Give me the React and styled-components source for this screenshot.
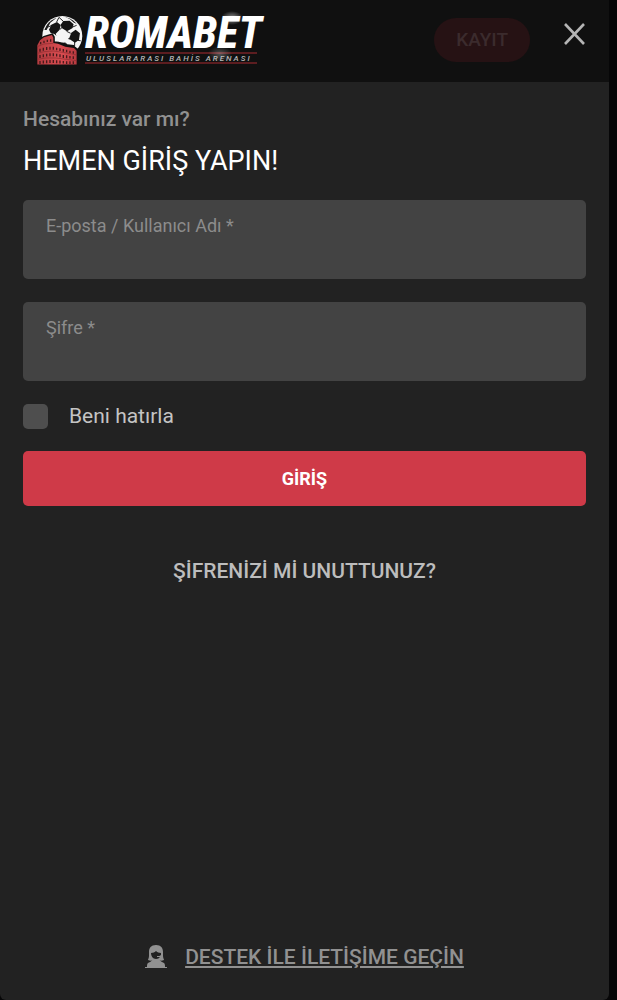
import React from "react";
import styled, { createGlobalStyle } from "styled-components";

const GlobalStyle = createGlobalStyle`
  * {
    box-sizing: border-box;
  }
  body {
    margin: 0;
    background: #060607;
    font-family: Roboto, sans-serif;
  }
`;

const Page = styled.div`
  display: flex;
  min-height: 100vh;
  padding-right: 8px;
`;

const Panel = styled.main`
  flex: 1;
  display: flex;
  flex-direction: column;
  overflow: hidden;
  background: #222222;
  border-radius: 0 0 6px 6px;
`;

const Header = styled.header`
  display: flex;
  align-items: flex-start;
  height: 82px;
  padding: 0 22px 0 32px;
  background: #101010;
`;

const LogoLink = styled.a`
  display: block;
  margin-right: auto;

  svg {
    display: block;
    overflow: visible;
  }
`;

const Register = styled.button`
  height: 44px;
  margin: 18px 32px 0 0;
  padding: 0 22px;
  border: 0;
  border-radius: 22px;
  background: #261214;
  color: #3b2b2d;
  font: 500 19px/24px Roboto, sans-serif;
`;

const Close = styled.button`
  margin-top: 22px;
  padding: 0;
  border: 0;
  background: none;

  svg {
    display: block;
  }
`;

const Form = styled.form`
  display: flex;
  flex-direction: column;
  padding: 23px 23px 0;
`;

const Question = styled.p`
  margin: 0;
  color: #919191;
  font-size: 21px;
  font-weight: 500;
  line-height: 28px;
`;

const Title = styled.h1`
  margin: 11px 0 22px;
  color: #ffffff;
  font-size: 27px;
  font-weight: 400;
  line-height: 34px;
`;

const Field = styled.label`
  display: flex;
  flex-direction: column;
  height: 79px;
  margin-bottom: 23px;
  padding: 15px 23px 0;
  border-radius: 5px;
  background: #434343;
  color: #8c8c8c;
  font-size: 18px;
  line-height: 22px;
`;

const Input = styled.input`
  width: 100%;
  height: 32px;
  padding: 0;
  border: 0;
  outline: 0;
  background: transparent;
  color: #ffffff;
  font: 400 18px/22px Roboto, sans-serif;
`;

const Remember = styled.label`
  display: flex;
  align-items: center;
  align-self: flex-start;
  gap: 21px;
  margin-bottom: 22px;
  color: #c4c4c4;
  font-size: 21px;
  line-height: 25px;
`;

const Checkbox = styled.input`
  appearance: none;
  width: 25px;
  height: 25px;
  margin: 0;
  border-radius: 5px;
  background: #4e4e4e;

  &:checked {
    background: #cf3a48;
  }
`;

const Submit = styled.button`
  height: 55px;
  border: 0;
  border-radius: 5px;
  background: #cf3a48;
  color: #ffffff;
  font: 700 18px/24px Roboto, sans-serif;
`;

const Forgot = styled.a`
  align-self: center;
  margin-top: 51px;
  color: #bdbdbd;
  font-size: 21px;
  font-weight: 500;
  line-height: 28px;
  text-decoration: none;
`;

const Support = styled.footer`
  display: flex;
  align-items: center;
  justify-content: center;
  gap: 18px;
  margin-top: auto;
  padding-bottom: 29px;
`;

const SupportLink = styled.a`
  color: #919191;
  font-size: 21px;
  font-weight: 500;
  line-height: 28px;
  text-decoration: underline;
`;

const LogoWord = styled.text`
  fill: #ffffff;
  font: italic 800 44px "Roboto Condensed", "Liberation Sans Narrow", Roboto, sans-serif;
`;

const LogoTagline = styled.text`
  fill: #b4b4b4;
  font: italic 500 8px Roboto, sans-serif;
  letter-spacing: 2px;
`;

function Logo() {
  return (
    <svg width="240" height="72" viewBox="32 0 240 72" aria-label="Romabet">
      <defs>
        <clipPath id="ball">
          <circle cx="79" cy="72" r="57" />
        </clipPath>
        <radialGradient id="glow">
          <stop offset="0" stopColor="#fff" stopOpacity="0.55" />
          <stop offset="1" stopColor="#fff" stopOpacity="0" />
        </radialGradient>
        <linearGradient id="stone" x1="0" x2="1">
          <stop offset="0" stopColor="#b43c40" />
          <stop offset="0.6" stopColor="#d94c50" />
          <stop offset="1" stopColor="#b83a40" />
        </linearGradient>
      </defs>
      <g transform="translate(36 12) scale(0.333)">
        <circle cx="79" cy="72" r="60" fill="#f4f4f4" />
        <g clipPath="url(#ball)">
          <path
            d="M72 52l7-6M57 66l3 4M92 58l12 6M97 80l5 1M86 92l6 4M62 30l7-14M82 28l-13-12M69 16l-2-6M108 46l14-6M48 40l-14 6M126 85l10 2M116 90l0 12"
            stroke="#222"
            strokeWidth="3"
          />
          <path
            d="M46 38l17-8 11 9-3 14-13 14-14-4-5-10zM82 27l19-1 12 11-4 12-16 9-16-10-3-10zM106 62l13-9 13 11-3 20-12 8-18-12zM66 90l19 2 9 5 20 2 6 10-14 12-18 6-22-12z"
            fill="#131313"
          />
          <path d="M24 54l12-24 20-14 6 1-19 15-11 22zM84 13l22 6 16 16-8-3-12-10z" fill="#1d1d1d" />
        </g>
        <path
          d="M3 160V100l8-16 13-10 25-7 5 8v15l14 2 22 10 26 4 10 8v46z"
          fill="#101010"
          stroke="#101010"
          strokeWidth="5"
        />
        <path
          d="M4 158V100l8-15 12-9 24-7 4 8v16l14 2 22 9 26 4 8 8v42z"
          fill="url(#stone)"
        />
        <path
          d="M14 97v-7M24 93v-7M34 90v-7M44 89v-7M12 119v-9M22 116v-9M32 114v-9M42 113v-9M52 113v-9M62 115v-8M72 117v-8M82 119v-8M92 121v-8M102 123v-7M112 125v-7M12 138v-9M22 136v-9M32 134v-9M42 133v-9M52 133v-9M62 134v-9M72 136v-9M82 138v-9M92 139v-9M102 140v-8M112 141v-8M12 156v-9M22 155v-9M32 154v-9M42 153v-9M52 153v-9M62 154v-9M72 155v-9M82 155v-8M92 156v-8M102 156v-8M112 156v-8"
          stroke="#481a1c"
          strokeWidth="4"
        />
        <path
          d="M4 104l20-8 28-2M4 124l20-5 28-2 40 6 30 6M4 142l26-4 28 0 64 8"
          stroke="#8e2c31"
          strokeWidth="2"
          fill="none"
        />
      </g>
      <LogoWord x="85" y="48">ROMABET</LogoWord>
      <path d="M85 53h172M85 63h172" stroke="#a82a30" />
      <LogoTagline x="86" y="61">ULUSLARARASI BAHİS ARENASI</LogoTagline>
      <ellipse cx="232" cy="18" rx="11" ry="7" fill="url(#glow)" />
      <ellipse cx="220" cy="54" rx="12" ry="8" fill="url(#glow)" opacity="0.5" />
    </svg>
  );
}

export default function App() {
  return (
    <>
      <GlobalStyle />
      <Page>
        <Panel>
          <Header>
            <LogoLink href="#">
              <Logo />
            </LogoLink>
            <Register type="button">KAYIT</Register>
            <Close type="button" aria-label="Kapat">
              <svg width="25" height="25" viewBox="0 0 25 25">
                <path d="M3 2l19 20M22 2L3 22" stroke="#b5b5b5" strokeWidth="2.6" />
              </svg>
            </Close>
          </Header>
          <Form>
            <Question>Hesabınız var mı?</Question>
            <Title>HEMEN GİRİŞ YAPIN!</Title>
            <Field>
              E-posta / Kullanıcı Adı *
              <Input type="text" name="username" />
            </Field>
            <Field>
              Şifre *
              <Input type="password" name="password" />
            </Field>
            <Remember>
              <Checkbox type="checkbox" name="remember" />
              Beni hatırla
            </Remember>
            <Submit type="submit">GİRİŞ</Submit>
            <Forgot href="#">ŞİFRENİZİ Mİ UNUTTUNUZ?</Forgot>
          </Form>
          <Support>
            <svg width="22" height="24" viewBox="0 0 22 24">
              <path
                d="M11 0C6 0 4 3 4 7v4c0 2-1 3-1 4 2 1 4 1 5 0h6c1 1 3 1 5 0 0-1-1-2-1-4V7c0-4-2-7-7-7z"
                fill="#919191"
              />
              <path
                d="M6 8c2 0 4-1 5-2 1 1 3 2 5 2v2c-1 1-2 1-4 1v1h3c-1 1-2 2-4 2-3 0-5-3-5-6z"
                fill="#222222"
              />
              <path d="M8 14c2 1 4 1 6 0 1 2 3 3 5 4 1 1 1 2 1 4h2v1H0v-1h2c0-2 0-3 1-4 2-1 4-2 5-4z" fill="#919191" />
            </svg>
            <SupportLink href="#">DESTEK İLE İLETİŞİME GEÇİN</SupportLink>
          </Support>
        </Panel>
      </Page>
    </>
  );
}
